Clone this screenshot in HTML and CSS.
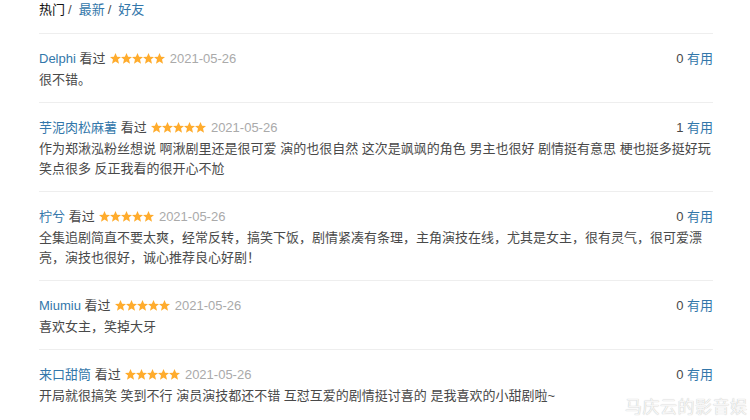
FILE: index.html
```html
<!DOCTYPE html>
<html>
<head>
  <meta charset="utf-8">
  <title>短评</title>
  <link rel="stylesheet" href="styles.css">
</head>
<body>
  <div id="comments">
    <div class="tabs">
      <span class="tab current">热门</span><span class="sep">/</span><a class="tab">最新</a><span class="sep">/</span><a class="tab">好友</a>
    </div>

    <div class="comment">
      <div class="info">
        <div class="meta">
          <a class="user">Delphi</a> <span>看过</span>
          <svg class="stars" viewBox="0 0 55 11"><use href="#star" x="0"/><use href="#star" x="11"/><use href="#star" x="22"/><use href="#star" x="33"/><use href="#star" x="44"/></svg>
          <span class="time">2021-05-26</span>
        </div>
        <div class="votes"><span class="count">0</span> <a>有用</a></div>
      </div>
      <p class="short">很不错。</p>
    </div>

    <div class="comment">
      <div class="info">
        <div class="meta">
          <a class="user">芋泥肉松麻薯</a> <span>看过</span>
          <svg class="stars" viewBox="0 0 55 11"><use href="#star" x="0"/><use href="#star" x="11"/><use href="#star" x="22"/><use href="#star" x="33"/><use href="#star" x="44"/></svg>
          <span class="time">2021-05-26</span>
        </div>
        <div class="votes"><span class="count">1</span> <a>有用</a></div>
      </div>
      <p class="short">作为郑湫泓粉丝想说 啊湫剧里还是很可爱 演的也很自然 这次是飒飒的角色 男主也很好 剧情挺有意思 梗也挺多挺好玩 笑点很多 反正我看的很开心不尬</p>
    </div>

    <div class="comment">
      <div class="info">
        <div class="meta">
          <a class="user">柠兮</a> <span>看过</span>
          <svg class="stars" viewBox="0 0 55 11"><use href="#star" x="0"/><use href="#star" x="11"/><use href="#star" x="22"/><use href="#star" x="33"/><use href="#star" x="44"/></svg>
          <span class="time">2021-05-26</span>
        </div>
        <div class="votes"><span class="count">0</span> <a>有用</a></div>
      </div>
      <p class="short">全集追剧简直不要太爽，经常反转，搞笑下饭，剧情紧凑有条理，主角演技在线，尤其是女主，很有灵气，很可爱漂亮，演技也很好，诚心推荐良心好剧！</p>
    </div>

    <div class="comment">
      <div class="info">
        <div class="meta">
          <a class="user">Miumiu</a> <span>看过</span>
          <svg class="stars" viewBox="0 0 55 11"><use href="#star" x="0"/><use href="#star" x="11"/><use href="#star" x="22"/><use href="#star" x="33"/><use href="#star" x="44"/></svg>
          <span class="time">2021-05-26</span>
        </div>
        <div class="votes"><span class="count">0</span> <a>有用</a></div>
      </div>
      <p class="short">喜欢女主，笑掉大牙</p>
    </div>

    <div class="comment">
      <div class="info">
        <div class="meta">
          <a class="user">来口甜筒</a> <span>看过</span>
          <svg class="stars" viewBox="0 0 55 11"><use href="#star" x="0"/><use href="#star" x="11"/><use href="#star" x="22"/><use href="#star" x="33"/><use href="#star" x="44"/></svg>
          <span class="time">2021-05-26</span>
        </div>
        <div class="votes"><span class="count">0</span> <a>有用</a></div>
      </div>
      <p class="short">开局就很搞笑 笑到不行 演员演技都还不错 互怼互爱的剧情挺讨喜的 是我喜欢的小甜剧啦~</p>
    </div>
  </div>

  <div class="watermark">马庆云的影音娱</div>

  <svg width="0" height="0" class="defs">
    <defs>
      <polygon id="star" fill="#ffac2d" points="5.5,0 7.1,3.7 11,4 8,6.6 9,10.8 5.5,8.6 2,10.8 3,6.6 0,4 3.9,3.7"/>
    </defs>
  </svg>
</body>
</html>
```

FILE: styles.css
```css
html, body {
  margin: 0;
  background-color: #fff;
  overflow: hidden;
}
body {
  font-family: "Liberation Sans", "Noto Sans CJK SC", sans-serif;
  font-size: 13px;
  color: #494949;
  height: 420px;
  position: relative;
}
a {
  color: #37a;
  text-decoration: none;
  cursor: pointer;
}
#comments {
  width: 674px;
  margin-left: 39px;
}
.tabs {
  line-height: 20px;
  height: 34px;
  border-bottom: 1px solid #eee;
  box-sizing: border-box;
  color: #111;
}
.tab.current {
  color: #111;
}
.sep {
  color: #494949;
  margin: 0 7px 0 3px;
}
.comment {
  padding: 15px 0 12px;
  border-bottom: 1px solid #eee;
}
.comment:last-child {
  border-bottom: 0;
}
.info {
  display: flex;
  justify-content: space-between;
  line-height: 20px;
  height: 20px;
}
.stars {
  width: 55px;
  height: 11px;
  margin: 0 1px;
  vertical-align: -1px;
}
.time {
  color: #aaa;
}
.count {
  color: #494949;
}
.short {
  margin: 1px 0 0;
  line-height: 20px;
}
.defs {
  position: absolute;
}
.watermark {
  position: absolute;
  left: 625px;
  top: 393px;
  font-size: 17px;
  white-space: nowrap;
  color: #f6f6f6;
  text-shadow: 0 0 1px #b4b4b4;
  letter-spacing: 0.5px;
}
```
